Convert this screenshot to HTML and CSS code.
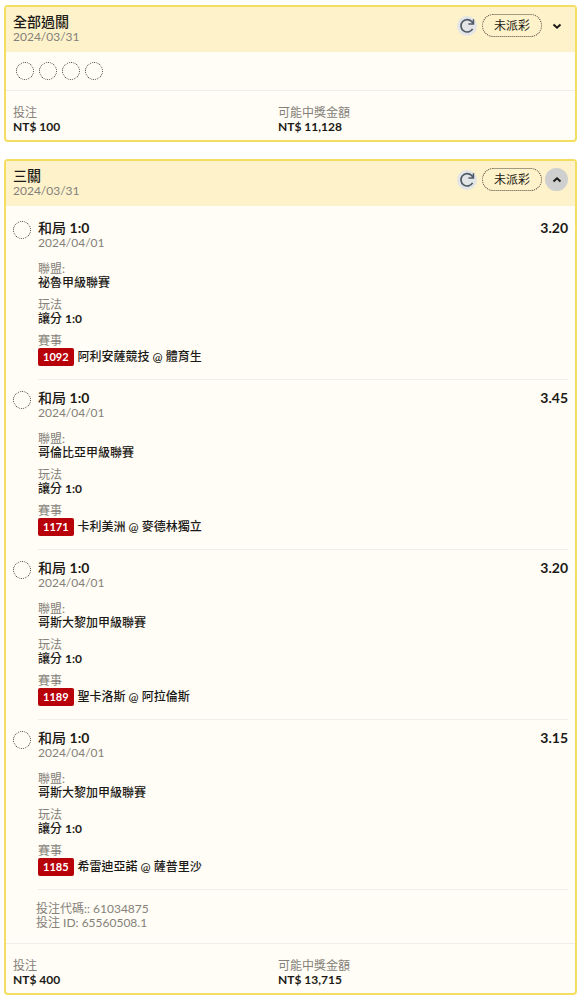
FILE: index.html
```html
<!DOCTYPE html>
<html lang="zh-Hant">
<head>
  <meta charset="UTF-8">
  <meta name="viewport" content="width=device-width, initial-scale=1.0">
  <title>投注紀錄</title>
  <link rel="stylesheet" href="styles.css">
</head>
<body>
  <svg class="sprite" aria-hidden="true">
    <symbol id="refresh" viewBox="0 0 20 20">
      <path d="M15.6 12.8A6.2 6.2 0 1 1 14.6 5.4L16.2 7.4" fill="none" stroke="currentColor" stroke-width="1.7"/>
      <path d="M17.2 3.2V8.8H11.4V7.3H15.7V3.2Z" fill="currentColor"/>
    </symbol>
    <symbol id="chevron" viewBox="0 0 10 10">
      <path d="M1.5 3.5L5 6.7L8.5 3.5" fill="none" stroke="currentColor" stroke-width="2"/>
    </symbol>
  </svg>

  <section class="card">
    <header class="card-header">
      <div class="card-title">
        <h2>全部過關</h2>
        <time class="date">2024/03/31</time>
      </div>
      <button class="refresh-btn" aria-label="重新整理"><svg><use href="#refresh"/></svg></button>
      <span class="status">未派彩</span>
      <button class="toggle-btn" aria-label="展開"><svg><use href="#chevron"/></svg></button>
    </header>
    <div class="circles">
      <span class="circle"></span>
      <span class="circle"></span>
      <span class="circle"></span>
      <span class="circle"></span>
    </div>
    <dl class="card-footer">
      <div><dt>投注</dt><dd>NT$ 100</dd></div>
      <div><dt>可能中獎金額</dt><dd>NT$ 11,128</dd></div>
    </dl>
  </section>

  <section class="card">
    <header class="card-header">
      <div class="card-title">
        <h2>三關</h2>
        <time class="date">2024/03/31</time>
      </div>
      <button class="refresh-btn" aria-label="重新整理"><svg><use href="#refresh"/></svg></button>
      <span class="status">未派彩</span>
      <button class="toggle-btn open" aria-label="收合"><svg><use href="#chevron"/></svg></button>
    </header>

    <div class="selections">
      <article class="selection">
        <span class="circle"></span>
        <div class="selection-body">
          <div class="selection-top"><h3>和局 <b>1:0</b></h3><span class="odds">3.20</span></div>
          <time class="date">2024/04/01</time>
          <dl class="details">
            <div><dt>聯盟:</dt><dd>祕魯甲級聯賽</dd></div>
            <div><dt>玩法</dt><dd>讓分 <b>1:0</b></dd></div>
            <div><dt>賽事</dt><dd class="match"><span class="badge">1092</span>阿利安薩競技 @ 體育生</dd></div>
          </dl>
        </div>
      </article>

      <article class="selection">
        <span class="circle"></span>
        <div class="selection-body">
          <div class="selection-top"><h3>和局 <b>1:0</b></h3><span class="odds">3.45</span></div>
          <time class="date">2024/04/01</time>
          <dl class="details">
            <div><dt>聯盟:</dt><dd>哥倫比亞甲級聯賽</dd></div>
            <div><dt>玩法</dt><dd>讓分 <b>1:0</b></dd></div>
            <div><dt>賽事</dt><dd class="match"><span class="badge">1171</span>卡利美洲 @ 麥德林獨立</dd></div>
          </dl>
        </div>
      </article>

      <article class="selection">
        <span class="circle"></span>
        <div class="selection-body">
          <div class="selection-top"><h3>和局 <b>1:0</b></h3><span class="odds">3.20</span></div>
          <time class="date">2024/04/01</time>
          <dl class="details">
            <div><dt>聯盟:</dt><dd>哥斯大黎加甲級聯賽</dd></div>
            <div><dt>玩法</dt><dd>讓分 <b>1:0</b></dd></div>
            <div><dt>賽事</dt><dd class="match"><span class="badge">1189</span>聖卡洛斯 @ 阿拉倫斯</dd></div>
          </dl>
        </div>
      </article>

      <article class="selection">
        <span class="circle"></span>
        <div class="selection-body">
          <div class="selection-top"><h3>和局 <b>1:0</b></h3><span class="odds">3.15</span></div>
          <time class="date">2024/04/01</time>
          <dl class="details">
            <div><dt>聯盟:</dt><dd>哥斯大黎加甲級聯賽</dd></div>
            <div><dt>玩法</dt><dd>讓分 <b>1:0</b></dd></div>
            <div><dt>賽事</dt><dd class="match"><span class="badge">1185</span>希雷迪亞諾 @ 薩普里沙</dd></div>
          </dl>
        </div>
      </article>
    </div>

    <div class="bet-info">
      <p>投注代碼:: 61034875</p>
      <p>投注 ID: 65560508.1</p>
    </div>
    <dl class="card-footer">
      <div><dt>投注</dt><dd>NT$ 400</dd></div>
      <div><dt>可能中獎金額</dt><dd>NT$ 13,715</dd></div>
    </dl>
  </section>
</body>
</html>
```

FILE: styles.css
```css
* {
  box-sizing: border-box;
}
body {
  margin: 0;
  padding: 5px 2px 5px 4px;
  background: #fff;
  color: #1c1a17;
  font-family: Lato, "Noto Sans CJK TC", sans-serif;
  font-size: 12px;
  line-height: 14px;
}
h2, h3, p, dl, dd {
  margin: 0;
}
h2, h3 {
  font-size: 14px;
  font-weight: 500;
  line-height: 16px;
}
button {
  display: flex;
  align-items: center;
  justify-content: center;
  padding: 0;
  border: none;
  border-radius: 50%;
  background: none;
  cursor: pointer;
}
.sprite {
  display: none;
}
.card {
  margin-bottom: 17px;
  border: 2px solid #f3de62;
  border-radius: 4px;
  background: #fffdf5;
}
.card:last-child {
  margin-bottom: 0;
}
.card-header {
  display: flex;
  align-items: flex-start;
  min-height: 45px;
  padding: 7px 7px 0;
  background: #fdf2ca;
}
.card-title {
  flex: 1;
}
.date {
  display: block;
  color: #85817a;
}
.refresh-btn {
  width: 20px;
  height: 20px;
  margin: 2px 5px 0 0;
  background: #e3e5e6;
  color: #505a66;
}
.refresh-btn svg {
  width: 20px;
  height: 20px;
}
.status {
  padding: 2px 11px;
  border: 1px dotted #4a4436;
  border-radius: 12px;
  line-height: 17px;
}
.toggle-btn {
  width: 23px;
  height: 23px;
  margin-left: 3px;
  color: #1c1a17;
}
.toggle-btn svg {
  width: 10px;
  height: 10px;
}
.toggle-btn.open {
  background: #cfcfcf;
}
.toggle-btn.open svg {
  transform: rotate(180deg);
}
.circles {
  display: flex;
  gap: 5px;
  padding: 10px;
}
.circle {
  flex: none;
  width: 18px;
  height: 18px;
  border: 1px dotted #3a3632;
  border-radius: 50%;
}
.selections {
  padding-top: 4px;
}
.selection {
  display: flex;
  gap: 7px;
  padding: 0 7px;
}
.selection .circle {
  margin-top: 11px;
}
.selection-body {
  flex: 1;
  padding: 10px 0 13px;
  border-bottom: 1px solid #efede8;
}
.selection-top {
  display: flex;
  justify-content: space-between;
}
.odds {
  font-size: 14px;
  font-weight: 700;
  line-height: 16px;
}
.details {
  display: grid;
  gap: 8px;
  margin-top: 12px;
}
dt {
  color: #85817a;
}
.details dd {
  font-weight: 500;
}
.match {
  display: flex;
  align-items: center;
  gap: 4px;
}
.badge {
  padding: 0 5px;
  border-radius: 2px;
  background: #b80009;
  color: #fff;
  font-size: 11px;
  font-weight: 700;
  line-height: 18px;
}
.bet-info {
  padding: 12px 30px 13px;
  color: #85817a;
}
.card-footer {
  display: grid;
  grid-template-columns: 1fr 1fr;
  padding: 15px 32px 6px 7px;
  border-top: 1px solid #efede8;
}
.card-footer dd {
  font-weight: 700;
}
```
